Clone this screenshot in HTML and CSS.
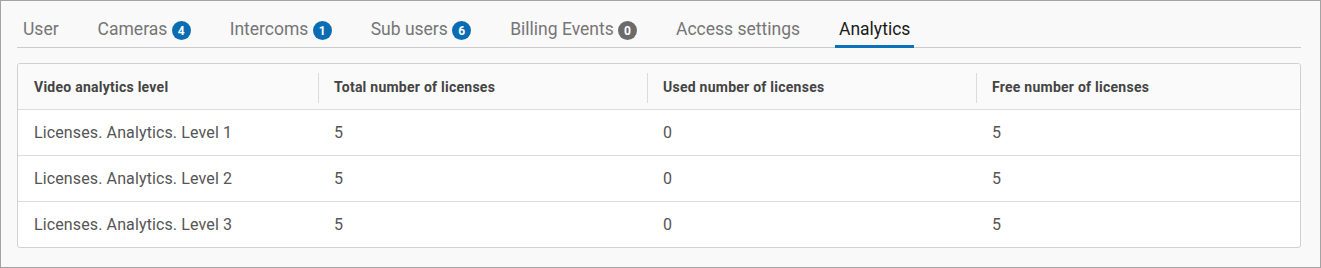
FILE: index.html
```html
<!DOCTYPE html>
<html>
<head>
<meta charset="utf-8">
<link rel="stylesheet" href="styles.css">
</head>
<body>
<div class="frame">
  <nav class="tabs">
    <div class="tab">User</div>
    <div class="tab">Cameras <span class="badge">4</span></div>
    <div class="tab">Intercoms <span class="badge">1</span></div>
    <div class="tab">Sub users <span class="badge">6</span></div>
    <div class="tab">Billing Events <span class="badge badge-gray">0</span></div>
    <div class="tab">Access settings</div>
    <div class="tab active">Analytics</div>
  </nav>
  <div class="table">
    <div class="row head">
      <div class="cell c1">Video analytics level</div>
      <div class="cell c2">Total number of licenses</div>
      <div class="cell c3">Used number of licenses</div>
      <div class="cell c4">Free number of licenses</div>
    </div>
    <div class="row">
      <div class="cell c1">Licenses. Analytics. Level 1</div>
      <div class="cell c2">5</div>
      <div class="cell c3">0</div>
      <div class="cell c4">5</div>
    </div>
    <div class="row">
      <div class="cell c1">Licenses. Analytics. Level 2</div>
      <div class="cell c2">5</div>
      <div class="cell c3">0</div>
      <div class="cell c4">5</div>
    </div>
    <div class="row">
      <div class="cell c1">Licenses. Analytics. Level 3</div>
      <div class="cell c2">5</div>
      <div class="cell c3">0</div>
      <div class="cell c4">5</div>
    </div>
  </div>
</div>
</body>
</html>
```
FILE: styles.css
```css
html, body {
  margin: 0;
  padding: 0;
}
body {
  font-family: Roboto, "Liberation Sans", sans-serif;
  background: #fff;
}
.frame {
  box-sizing: border-box;
  width: 1321px;
  height: 268px;
  border: 1px solid #a3a3a3;
  background: #f9f9f9;
  padding: 16px 19px 0 16px;
}
.tabs {
  display: flex;
  border-bottom: 1px solid #cccccc;
  height: 30px;
  padding-left: 2px;
}
.tab {
  position: relative;
  display: flex;
  align-items: center;
  height: 24px;
  font-size: 17.5px;
  line-height: 24px;
  color: #767676;
  padding: 0 4px;
  margin-right: 31px;
  white-space: pre;
}
.tab.active {
  color: #1a1a1a;
}
.tab.active::after {
  content: "";
  position: absolute;
  left: 0;
  right: 0;
  bottom: -7px;
  height: 3px;
  background: #0a72b8;
}
.badge {
  display: inline-flex;
  align-items: center;
  justify-content: center;
  width: 19px;
  height: 19px;
  margin-top: 3px;
  border-radius: 50%;
  background: #0a6db3;
  color: #fff;
  font-size: 12px;
  font-weight: 700;
  line-height: 1;
}
.badge-gray {
  background: #6b6b6b;
}
.table {
  margin-top: 15px;
  border: 1px solid #d0d0d0;
  border-radius: 3px;
  background: #fff;
  overflow: hidden;
}
.row {
  display: grid;
  grid-template-columns: 300px 329px 329px 1fr;
  height: 45px;
  border-top: 1px solid #dcdcdc;
  align-items: center;
  font-size: 16px;
  letter-spacing: 0.12px;
  color: #555;
}
.row:first-child {
  border-top: none;
}
.row.head {
  background: #fafafa;
  font-size: 14px;
  font-weight: 700;
  letter-spacing: 0.25px;
  color: #444;
}
.cell {
  padding: 0 16px;
  position: relative;
}
.head .cell + .cell::before {
  content: "";
  position: absolute;
  left: 0;
  top: -6px;
  height: 30px;
  width: 1px;
  background: #dcdcdc;
}
```
